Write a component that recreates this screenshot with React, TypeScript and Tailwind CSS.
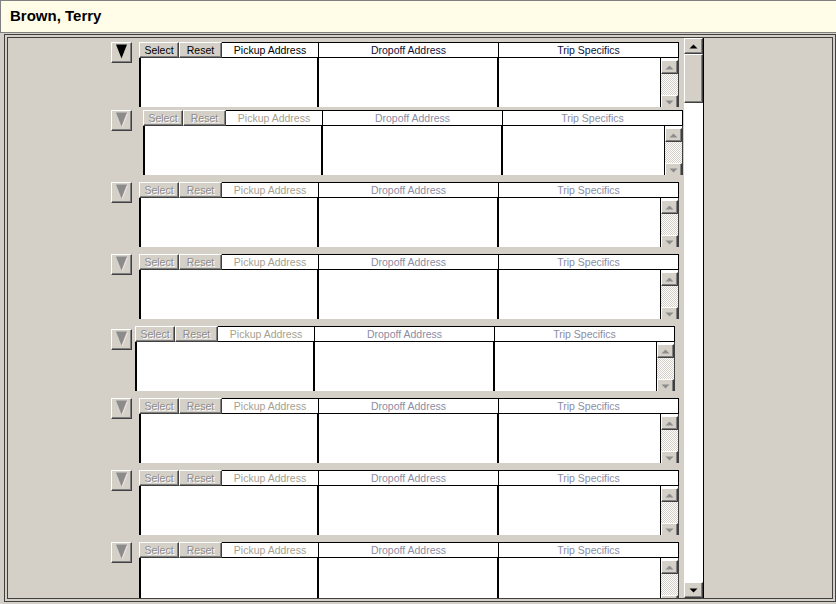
import React from "react";

type Row = { active?: boolean; tableShift?: string; btnShift?: string; rowGap?: string };

const rows: Row[] = [
  { active: true, rowGap: "mb-[3px]" },
  { tableShift: "ml-[11px]" },
  {},
  {},
  { tableShift: "ml-[3px]", btnShift: "mt-[3px]" },
  {},
  {},
  {},
];

const raised =
  "border border-t-white border-l-white border-r-[#404040] border-b-[#404040] shadow-[inset_-1px_-1px_0_#808080] bg-[#d4d0c8]";

function DropButton({ active, className = "" }: { active?: boolean; className?: string }) {
  return (
    <div className={`w-[21px] h-[21px] shrink-0 ${raised} ${className}`}>
      <svg width="19" height="19" viewBox="0 0 19 19" className="block">
        {active ? (
          <polygon points="4,1.5 15,1.5 9.5,15.5" fill="#000" />
        ) : (
          <>
            <polygon points="5,2.5 16,2.5 10.5,16.5" fill="#f0e0e0" />
            <polygon points="4,1.5 15,1.5 9.5,15.5" fill="#8c8c8c" />
          </>
        )}
      </svg>
    </div>
  );
}

function SmallArrow({ up, color }: { up?: boolean; color: string }) {
  return (
    <svg width="9" height="5" viewBox="0 0 9 5" className="block">
      <polygon points={up ? "4.5,0.5 8.5,4.5 0.5,4.5" : "0.5,0.5 8.5,0.5 4.5,4.5"} fill={color} />
    </svg>
  );
}

function TripTable({ active, className = "" }: { active?: boolean; className?: string }) {
  const btnText = active ? "text-black" : "text-[#8c8c8c] [text-shadow:1px_1px_0_#ffffff]";
  const pickupText = active ? "text-black" : "text-[#a8a08c]";
  const otherText = active ? "text-[#10103a]" : "text-[#8c8ca4]";
  return (
    <div className={`w-[540px] h-[65px] shrink-0 overflow-hidden flex flex-col ${className}`}>
      {/* header */}
      <div className="flex h-[16px] shrink-0 leading-[14px]">
        <div className={`w-[40px] text-center ${raised} ${btnText}`}>Select</div>
        <div className={`w-[43px] text-center ${raised} ${btnText}`}>Reset</div>
        <div className={`w-[97px] bg-white border-y border-r border-black text-center ${pickupText}`}>
          Pickup Address
        </div>
        <div className={`w-[180px] bg-white border-y border-r border-black text-center ${otherText}`}>
          Dropoff Address
        </div>
        <div className={`w-[180px] bg-white border-y border-r border-black text-center ${otherText}`}>
          Trip Specifics
        </div>
      </div>
      {/* body */}
      <div className="flex flex-1 min-h-0">
        <div className="w-[180px] bg-white border-l-2 border-r-2 border-black" />
        <div className="w-[180px] bg-white border-r-2 border-black" />
        <div className="w-[180px] bg-white flex border-r border-[#404040]">
          <div className="flex-1" />
          <div className="w-[18px] flex flex-col border-l border-black pt-[2px] bg-white">
            <div className={`h-[14px] shrink-0 flex items-center justify-center ${raised}`}>
              <SmallArrow up color="#8c8c8c" />
            </div>
            <div className="h-[21px] shrink-0 bg-[image:repeating-conic-gradient(#d4d0c8_0%_25%,#ffffff_0%_50%)] bg-[length:2px_2px]" />
            <div className={`h-[14px] shrink-0 flex items-center justify-center ${raised}`}>
              <SmallArrow color="#8c8c8c" />
            </div>
          </div>
        </div>
      </div>
    </div>
  );
}

export default function App() {
  return (
    <div className="w-[836px] h-[604px] overflow-hidden bg-[#d4d0c8] font-['Liberation_Sans',Arial,sans-serif] text-[10.5px] flex flex-col">
      {/* Title bar */}
      <div className="h-[33px] shrink-0 bg-[#fffde8] border-t border-l border-b border-[#808080] flex items-center pl-[9px]">
        <span className="text-[15px] font-bold text-black">Brown, Terry</span>
      </div>

      {/* Frame */}
      <div className="flex-1 min-h-0 mt-[1px] ml-[4px] mb-[2px] border border-[#404040] p-[2px]">
        <div className="h-full border border-[#404040] flex overflow-hidden">
          {/* scrolled rows */}
          <div className="w-[676px] shrink-0 h-full overflow-hidden flex flex-col pt-[4px]">
            {rows.map((r, i) => (
              <div key={i} className={`flex shrink-0 h-[65px] ${r.rowGap ?? "mb-[7px]"}`}>
                <DropButton active={r.active} className={`ml-[103px] ${r.btnShift ?? ""}`} />
                <TripTable active={r.active} className={r.tableShift ?? "ml-[7px]"} />
              </div>
            ))}
          </div>

          {/* main scrollbar */}
          <div className="w-[20px] shrink-0 h-full flex flex-col bg-white border-r border-black">
            <div className={`h-[16px] shrink-0 flex items-center justify-center ${raised}`}>
              <SmallArrow up color="#000" />
            </div>
            <div className={`h-[49px] shrink-0 ${raised}`} />
            <div className="flex-1" />
            <div className={`h-[16px] shrink-0 flex items-center justify-center ${raised}`}>
              <SmallArrow color="#000" />
            </div>
          </div>

          <div className="flex-1" />
        </div>
      </div>
    </div>
  );
}
